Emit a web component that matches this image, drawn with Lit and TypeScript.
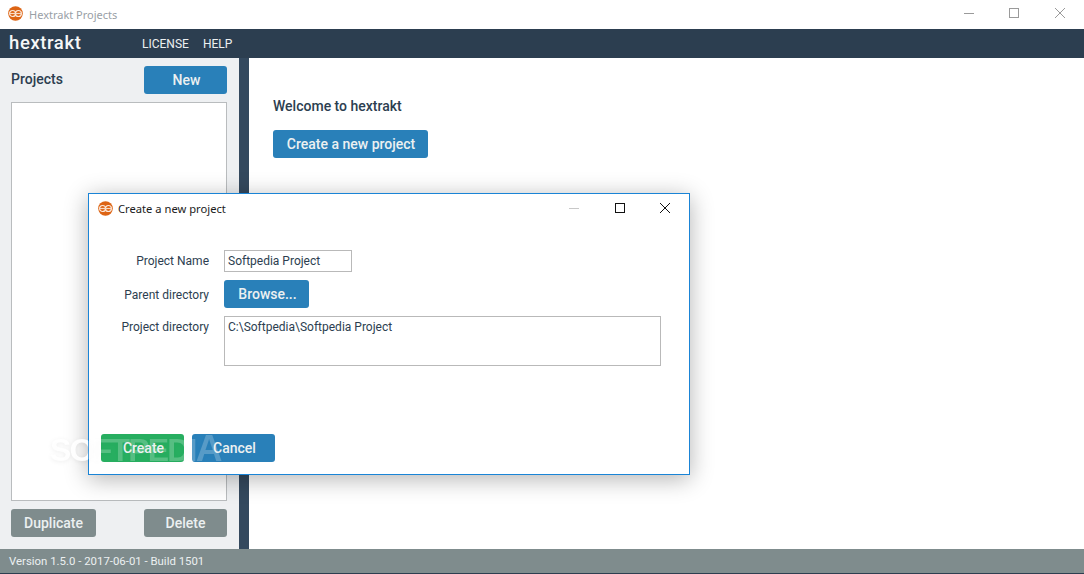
import { LitElement, html, css, svg } from "lit";
import { customElement } from "lit/decorators.js";

const logo = (size: number) => html`<svg class="logo" width=${size} height=${size} viewBox="0 0 16 16">
  <circle cx="8" cy="8" r="7.8" fill="#dd6414"></circle>
  ${svg`<circle cx="4.9" cy="8" r="3.2" fill="none" stroke="#fbe9dc" stroke-width="1.3"></circle>
  <circle cx="11.1" cy="8" r="3.2" fill="none" stroke="#fbe9dc" stroke-width="1.3"></circle>
  <rect x="1.5" y="7.4" width="13" height="1.2" fill="#f7d8c2"></rect>`}
</svg>`;

const winButtons = (cls: string) => html`<div class="winbtns ${cls}">
  <svg width="12" height="12" viewBox="0 0 12 12"><path class="min" d="M0 6.5H10"></path></svg>
  <svg width="12" height="12" viewBox="0 0 12 12"><rect class="stroke" x="1.5" y="1.5" width="9" height="9"></rect></svg>
  <svg width="12" height="12" viewBox="0 0 12 12"><path class="stroke" d="M1 1L11 11M11 1L1 11"></path></svg>
</div>`;

@customElement("app-root")
export class AppRoot extends LitElement {
  static styles = css`
    :host {
      display: block;
      position: relative;
      width: 1084px;
      height: 574px;
      overflow: hidden;
      background: #fff;
      font-family: Roboto, "Liberation Sans", sans-serif;
      font-size: 12px;
      color: #2c3e50;
    }
    .app { display: flex; flex-direction: column; height: 573px; border-bottom: 1px solid #2c3e50; }
    .titlebar { display: flex; align-items: center; height: 29px; flex: none; padding-left: 8px; gap: 6px; background: #fff; }
    .titlebar .logo { margin-top: -3px; }
    .titlebar .title { font-family: "Noto Sans", sans-serif; font-size: 11px; color: #99a0a6; flex: 1; }
    .winbtns { display: flex; }
    .winbtns svg { display: block; fill: none; }
    .winbtns.main { gap: 33px; padding-right: 18px; margin-top: -3px; }
    .winbtns.main svg:nth-child(2) { margin: 0 1px 0 -1px; }
    .winbtns.main path, .winbtns.main rect { stroke: #9a9a9a; }
    .winbtns.dlg { gap: 33px; padding-right: 18px; }
    .winbtns.dlg .stroke { stroke: #111; stroke-width: 1; }
    .winbtns.dlg .min { stroke: #c8c8c8; }
    .navbar { display: flex; align-items: center; height: 29px; flex: none; background: #2c3e50; color: #ecf0f1; }
    .brand { width: 142px; padding-left: 9px; box-sizing: border-box; font-weight: 500; font-size: 18.5px; letter-spacing: 0.6px; color: #f5f7f8; line-height: 29px; }
    .navbar a { font-size: 12px; margin-right: 14px; }
    .body { display: flex; flex: 1; min-height: 0; }
    .sidebar { width: 239px; flex: none; box-sizing: border-box; background: #eef0f2; padding: 8px 12px 12px 11px; display: flex; flex-direction: column; }
    .side-head { display: flex; justify-content: space-between; align-items: center; height: 28px; }
    .side-head h2 { margin: 0 0 2px; font-size: 14px; font-weight: 500; color: #2c3e50; }
    .list { flex: 1; margin: 8px 0; background: #fff; border: 1px solid #b9bcbe; }
    .side-foot { display: flex; justify-content: space-between; }
    .divider { width: 10px; flex: none; background: #34495e; }
    .content { flex: 1; padding: 40px 24px; background: #fff; }
    .content h1 { margin: 0 0 15px; font-size: 14px; line-height: 17px; font-weight: 500; color: #2c3e50; }
    .btn { display: inline-flex; align-items: center; justify-content: center; height: 28px; box-sizing: border-box; border-radius: 3px; font-size: 14px; font-weight: 500; color: #ecf0f1; background: #2980b9; padding-left: 2px; }
    .w83 { width: 83px; }
    .w85 { width: 85px; }
    .wide { width: 155px; padding-left: 1px; }
    .grey { background: #7f8c8d; padding-left: 0; }
    .green { background: #27ae60; }
    .footer { height: 24px; flex: none; box-sizing: border-box; padding-left: 9px; background: #7f8c8d; color: #ecf0f1; font-size: 11.4px; line-height: 24px; }
    .dialog { position: absolute; left: 88px; top: 193px; width: 602px; height: 282px; box-sizing: border-box; background: #fff; border: 1px solid #1a84d6; box-shadow: 0 4px 22px rgba(0,0,0,0.3); display: flex; flex-direction: column; }
    .dlg-title { display: flex; align-items: center; height: 28px; flex: none; padding-left: 9px; gap: 5px; font-family: "Noto Sans", sans-serif; font-size: 11.2px; color: #1a1a1a; }
    .dlg-title span { flex: 1; }
    .form { display: grid; grid-template-columns: 120px auto; column-gap: 15px; row-gap: 8px; justify-content: start; padding-top: 28px; }
    .form label { text-align: right; font-size: 12px; color: #2c3e50; }
    .form label.mid { align-self: center; }
    .form label.low { padding-top: 2px; }
    .form label.top { padding-top: 4px; }
    .input { box-sizing: border-box; border: 1px solid #b9b9b9; padding: 0 3px; font-size: 12px; color: #2c3e50; background: #fff; }
    .name { width: 128px; height: 22px; line-height: 20px; }
    .dir { width: 437px; height: 50px; line-height: 20px; }
    .browse { justify-self: start; }
    .dlg-foot { display: flex; gap: 8px; padding-left: 12px; margin-top: 68px; }
    .logo { flex: none; display: block; }
    .mark {
      position: absolute; left: 50px; top: 428px; width: 175px;
      font-family: "Liberation Sans", sans-serif; font-weight: 700; font-size: 32px; letter-spacing: -1.8px; line-height: 42px;
      white-space: nowrap; pointer-events: none;
      color: transparent;
      background: linear-gradient(90deg, rgba(255,255,255,0.9) 38px, rgba(255,255,255,0.22) 38px);
      -webkit-background-clip: text; background-clip: text;
      filter: drop-shadow(0 1px 2px rgba(0,0,0,0.07));
    }
    .big { font-size: 37px; }
    .reg { position: absolute; left: 168px; top: 2px; font-size: 7px; line-height: 8px; letter-spacing: 0; }
  `;

  render() {
    return html`
      <div class="app">
        <div class="titlebar">
          ${logo(15)}
          <div class="title">Hextrakt Projects</div>
          ${winButtons("main")}
        </div>
        <div class="navbar">
          <div class="brand">hextrakt</div>
          <a>LICENSE</a><a>HELP</a>
        </div>
        <div class="body">
          <div class="sidebar">
            <div class="side-head"><h2>Projects</h2><div class="btn w83">New</div></div>
            <div class="list"></div>
            <div class="side-foot"><div class="btn grey w85">Duplicate</div><div class="btn grey w83">Delete</div></div>
          </div>
          <div class="divider"></div>
          <div class="content">
            <h1>Welcome to hextrakt</h1>
            <div class="btn wide">Create a new project</div>
          </div>
        </div>
        <div class="footer">Version 1.5.0 - 2017-06-01 - Build 1501</div>
      </div>
      <div class="dialog">
        <div class="dlg-title">${logo(15)}<span>Create a new project</span>${winButtons("dlg")}</div>
        <div class="form">
          <label class="mid">Project Name</label><div class="input name">Softpedia Project</div>
          <label class="mid low">Parent directory</label><div class="btn w85 browse">Browse...</div>
          <label class="top">Project directory</label><div class="input dir">C:\\Softpedia\\Softpedia Project</div>
        </div>
        <div class="dlg-foot"><div class="btn green w83">Create</div><div class="btn w83">Cancel</div></div>
      </div>
      <div class="mark">SOFTPEDI<span class="big">A</span><span class="reg">®</span></div>
    `;
  }
}
